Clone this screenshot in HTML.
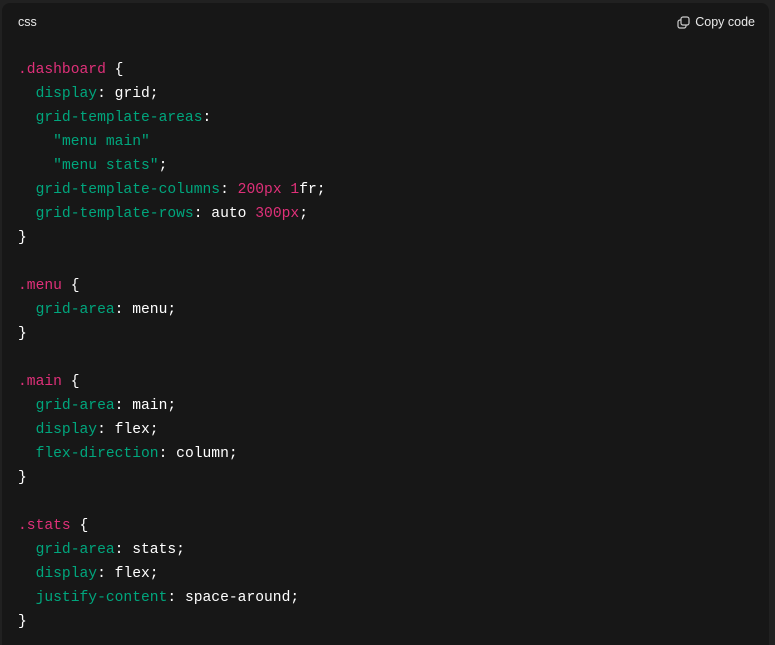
<!DOCTYPE html>
<html><head><style>
html,body{margin:0;padding:0;background:#212121;width:775px;height:645px;overflow:hidden}
.card{position:absolute;left:2px;top:3px;width:767px;height:642px;background:#171717;border-radius:8px 8px 0 0}
.lang{position:absolute;left:16px;top:12px;color:#e8e8e8;font:12.5px "Liberation Sans",sans-serif}
.copy{position:absolute;right:14px;top:12px;color:#e8e8e8;font:12.5px "Liberation Sans",sans-serif;display:flex;align-items:center;gap:5px}
pre{position:absolute;left:16px;top:55px;margin:0;font:14.65px/24px "Liberation Mono",monospace;color:#fff}
.p{color:#df3079}.g{color:#00a67d}
</style></head><body>
<div class="card">
<div class="lang">css</div>
<div class="copy"><svg width="13" height="13" viewBox="0 0 13 13" fill="none" stroke="#ccc" stroke-width="1.2"><rect x="4" y="1" width="8" height="8" rx="2"/><path d="M4 4H3a2 2 0 0 0-2 2v4a2 2 0 0 0 2 2h4a2 2 0 0 0 2-2V9"/></svg>Copy code</div>
<pre><span class="p">.dashboard</span> {
  <span class="g">display</span>: grid;
  <span class="g">grid-template-areas</span>:
    <span class="g">"menu main"</span>
    <span class="g">"menu stats"</span>;
  <span class="g">grid-template-columns</span>: <span class="p">200px</span> <span class="p">1</span>fr;
  <span class="g">grid-template-rows</span>: auto <span class="p">300px</span>;
}

<span class="p">.menu</span> {
  <span class="g">grid-area</span>: menu;
}

<span class="p">.main</span> {
  <span class="g">grid-area</span>: main;
  <span class="g">display</span>: flex;
  <span class="g">flex-direction</span>: column;
}

<span class="p">.stats</span> {
  <span class="g">grid-area</span>: stats;
  <span class="g">display</span>: flex;
  <span class="g">justify-content</span>: space-around;
}</pre>
</div>
</body></html>
